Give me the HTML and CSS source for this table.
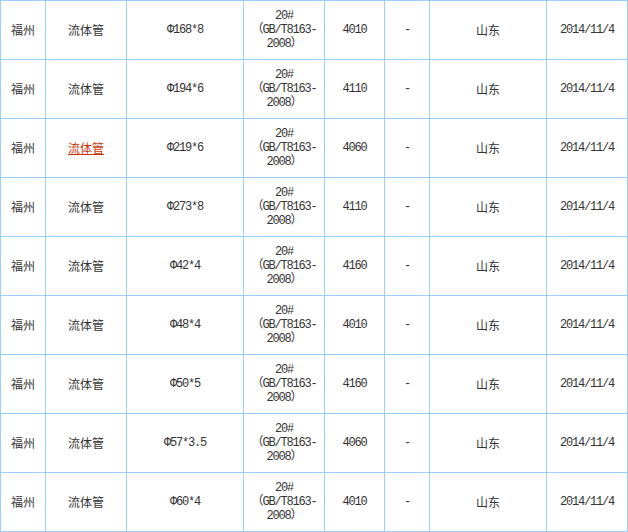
FILE: index.html
```html
<!DOCTYPE html>
<html lang="zh-CN">
<head>
<meta charset="utf-8">
<title>流体管价格</title>
<link rel="stylesheet" href="styles.css">
</head>
<body>
<table class="price-table">
<colgroup>
<col class="c-city"><col class="c-name"><col class="c-spec"><col class="c-grade"><col class="c-price"><col class="c-dash"><col class="c-origin"><col class="c-date">
</colgroup>
<tbody>
<tr><td>福州</td><td>流体管</td><td class="latin">Φ168*8</td><td class="latin">20#<br>（GB/T8163-<br>2008）</td><td class="latin">4010</td><td class="latin">-</td><td>山东</td><td class="latin">2014/11/4</td></tr>
<tr><td>福州</td><td>流体管</td><td class="latin">Φ194*6</td><td class="latin">20#<br>（GB/T8163-<br>2008）</td><td class="latin">4110</td><td class="latin">-</td><td>山东</td><td class="latin">2014/11/4</td></tr>
<tr><td>福州</td><td><a class="link" href="#">流体管</a></td><td class="latin">Φ219*6</td><td class="latin">20#<br>（GB/T8163-<br>2008）</td><td class="latin">4060</td><td class="latin">-</td><td>山东</td><td class="latin">2014/11/4</td></tr>
<tr><td>福州</td><td>流体管</td><td class="latin">Φ273*8</td><td class="latin">20#<br>（GB/T8163-<br>2008）</td><td class="latin">4110</td><td class="latin">-</td><td>山东</td><td class="latin">2014/11/4</td></tr>
<tr><td>福州</td><td>流体管</td><td class="latin">Φ42*4</td><td class="latin">20#<br>（GB/T8163-<br>2008）</td><td class="latin">4160</td><td class="latin">-</td><td>山东</td><td class="latin">2014/11/4</td></tr>
<tr><td>福州</td><td>流体管</td><td class="latin">Φ48*4</td><td class="latin">20#<br>（GB/T8163-<br>2008）</td><td class="latin">4010</td><td class="latin">-</td><td>山东</td><td class="latin">2014/11/4</td></tr>
<tr><td>福州</td><td>流体管</td><td class="latin">Φ50*5</td><td class="latin">20#<br>（GB/T8163-<br>2008）</td><td class="latin">4160</td><td class="latin">-</td><td>山东</td><td class="latin">2014/11/4</td></tr>
<tr><td>福州</td><td>流体管</td><td class="latin">Φ57*3.5</td><td class="latin">20#<br>（GB/T8163-<br>2008）</td><td class="latin">4060</td><td class="latin">-</td><td>山东</td><td class="latin">2014/11/4</td></tr>
<tr><td>福州</td><td>流体管</td><td class="latin">Φ60*4</td><td class="latin">20#<br>（GB/T8163-<br>2008）</td><td class="latin">4010</td><td class="latin">-</td><td>山东</td><td class="latin">2014/11/4</td></tr>
</tbody>
</table>
</body>
</html>
```
FILE: styles.css
```css
html, body {
  margin: 0;
  padding: 0;
  background: #ffffff;
}

.price-table {
  border-collapse: collapse;
  table-layout: fixed;
  width: 628px;
  font-family: "Noto Sans CJK SC", "Liberation Sans", sans-serif;
  font-size: 12px;
  color: #333333;
}

.c-city { width: 45px; }
.c-name { width: 81px; }
.c-spec { width: 117px; }
.c-grade { width: 81px; }
.c-price { width: 60px; }
.c-dash { width: 45px; }
.c-origin { width: 117px; }
.c-date { width: 81px; }

.price-table td {
  border: 1px solid #99ccff;
  height: 58px;
  padding: 0;
  text-align: center;
  vertical-align: middle;
  line-height: 14px;
  white-space: nowrap;
}

.price-table td.latin {
  font-family: "Liberation Mono", "Noto Sans CJK SC", monospace;
  letter-spacing: -1.2px;
}

.link {
  color: #cc3300;
  text-decoration: underline;
}
```
